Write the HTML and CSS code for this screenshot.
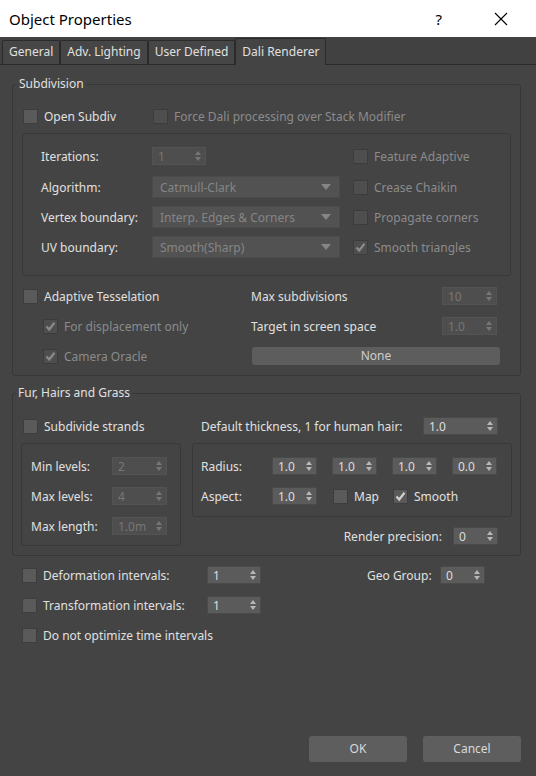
FILE: index.html
```html
<html>

<head>
  <link rel="stylesheet" href="styles.css">
</head>

<body>
  <div class="dialog">
    <div class="titlebar">
      <span class="title">Object Properties</span>
      <span class="help">?</span>
      <svg class="close" viewBox="0 0 14 14"><path d="M1 1L13 13M13 1L1 13" stroke="#000" stroke-width="1.1" fill="none" /></svg>
    </div>

    <div class="tabs">
      <div class="tab">General</div>
      <div class="tab">Adv. Lighting</div>
      <div class="tab">User Defined</div>
      <div class="tab active">Dali Renderer</div>
    </div>

    <div class="panel">
      <!-- Subdivision -->
      <fieldset class="group subdiv">
        <legend>Subdivision</legend>
        <div class="top-row">
          <label class="check open"><span class="cb"></span>Open Subdiv</label>
          <label class="check off"><span class="cb"></span>Force Dali processing over Stack Modifier</label>
        </div>

        <div class="box subdiv-box">
          <span>Iterations:</span>
          <span class="spin off w54"><span>1</span><i class="arr"></i></span>
          <label class="check off"><span class="cb"></span>Feature Adaptive</label>

          <span>Algorithm:</span>
          <span class="drop"><span>Catmull-Clark</span><i class="tri"></i></span>
          <label class="check off"><span class="cb"></span>Crease Chaikin</label>

          <span>Vertex boundary:</span>
          <span class="drop"><span>Interp. Edges &amp; Corners</span><i class="tri"></i></span>
          <label class="check off"><span class="cb"></span>Propagate corners</label>

          <span>UV boundary:</span>
          <span class="drop"><span>Smooth(Sharp)</span><i class="tri"></i></span>
          <label class="check off"><span class="cb on"><svg viewBox="0 0 13 13"><path d="M2.5 6.5L5.2 9.5L10.5 2.8" /></svg></span>Smooth triangles</label>
        </div>

        <div class="tess">
          <label class="check"><span class="cb"></span>Adaptive Tesselation</label>
          <div class="pair"><span>Max subdivisions</span><span class="spin off w55"><span>10</span><i class="arr"></i></span></div>

          <label class="check off indent"><span class="cb on"><svg viewBox="0 0 13 13"><path d="M2.5 6.5L5.2 9.5L10.5 2.8" /></svg></span>For displacement only</label>
          <div class="pair"><span>Target in screen space</span><span class="spin off w55"><span>1.0</span><i class="arr"></i></span></div>

          <label class="check off indent"><span class="cb on"><svg viewBox="0 0 13 13"><path d="M2.5 6.5L5.2 9.5L10.5 2.8" /></svg></span>Camera Oracle</label>
          <div class="btn-none">None</div>
        </div>
      </fieldset>

      <!-- Fur -->
      <fieldset class="group fur">
        <legend>Fur, Hairs and Grass</legend>
        <div class="fur-grid">
          <label class="check strands"><span class="cb"></span>Subdivide strands</label>
          <div class="thick"><span>Default thickness, 1 for human hair:</span><span class="spin w75"><span>1.0</span><i class="arr"></i></span></div>

          <div class="box levels">
            <span>Min levels:</span>
            <span class="spin off w55"><span>2</span><i class="arr"></i></span>
            <span>Max levels:</span>
            <span class="spin off w55"><span>4</span><i class="arr"></i></span>
            <span>Max length:</span>
            <span class="spin off w55"><span>1.0m</span><i class="arr"></i></span>
          </div>

          <div class="fur-right">
            <div class="box radius">
              <span>Radius:</span>
              <span class="spin w45"><span>1.0</span><i class="arr"></i></span>
              <span class="spin w45"><span>1.0</span><i class="arr"></i></span>
              <span class="spin w45"><span>1.0</span><i class="arr"></i></span>
              <span class="spin w45"><span>0.0</span><i class="arr"></i></span>
              <span>Aspect:</span>
              <span class="spin w45"><span>1.0</span><i class="arr"></i></span>
              <label class="check nudge"><span class="cb"></span>Map</label>
              <label class="check nudge"><span class="cb on"><svg viewBox="0 0 13 13"><path d="M2.5 6.5L5.2 9.5L10.5 2.8" /></svg></span>Smooth</label>
            </div>
            <div class="precision"><span>Render precision:</span><span class="spin w45"><span>0</span><i class="arr"></i></span></div>
          </div>
        </div>
      </fieldset>

      <!-- intervals -->
      <div class="intervals">
        <div class="irow">
          <label class="check iname"><span class="cb"></span>Deformation intervals:</label>
          <span class="spin w54"><span>1</span><i class="arr"></i></span>
          <span class="geo">Geo Group:</span>
          <span class="spin w45"><span>0</span><i class="arr"></i></span>
        </div>
        <div class="irow">
          <label class="check iname"><span class="cb"></span>Transformation intervals:</label>
          <span class="spin w54"><span>1</span><i class="arr"></i></span>
        </div>
        <div class="irow">
          <label class="check"><span class="cb"></span>Do not optimize time intervals</label>
        </div>
      </div>

      <div class="footer">
        <div class="btn">OK</div>
        <div class="btn">Cancel</div>
      </div>
    </div>
  </div>
</body>

</html>
```

FILE: styles.css
```css
/* dark 3ds max style dialog */
html,
body {
  margin: 0;
  background: #444;
}

body {
  font-family: "Noto Sans", "Segoe UI", sans-serif;
  font-size: 12px;
  color: #e0e0e0;
}

.dialog {
  width: 536px;
  height: 776px;
  display: flex;
  flex-direction: column;
}

/* title */
.titlebar {
  height: 37px;
  background: #fff;
  color: #000;
  display: flex;
  align-items: center;
  padding-left: 9px;
}

.title {
  flex: 1;
  font-size: 15px;
}

.help {
  font-size: 15px;
  margin-right: 52px;
}

.close {
  width: 14px;
  height: 14px;
  margin-right: 28px;
}

/* tabs */
.tabs {
  display: flex;
  align-items: flex-end;
  height: 24px;
  padding: 3px 0 0 2px;
  background: #414141;
  border-bottom: 1px solid #2a2a2a;
}

.tab {
  height: 23px;
  line-height: 22px;
  padding: 0 6px;
  background: #464646;
  border: 1px solid #2b2b2b;
  border-bottom: none;
  border-radius: 2px 2px 0 0;
}

.active {
  height: 26px;
  margin-bottom: -1px;
  line-height: 25px;
  background: #444;
}

/* panel */
.panel {
  flex: 1;
  display: flex;
  flex-direction: column;
  padding: 11px 15px 0 12px;
}

.group {
  margin: 0;
  min-width: 0;
  border: 1px solid #373737;
  border-radius: 3px;
}

.group legend {
  padding: 0 2px;
  margin-left: -5px;
  line-height: 16px;
}

.box {
  border: 1px solid #383838;
  border-radius: 3px;
}

/* controls */
.check {
  display: flex;
  align-items: center;
  gap: 6px;
  white-space: nowrap;
}

.off {
  color: #8b8b8b;
}

.cb {
  width: 15px;
  height: 15px;
  box-sizing: border-box;
  flex: none;
  background: #5a5a5a;
  border: 1px solid #3d3d3d;
}

.off .cb {
  background: #4e4e4e;
  border-color: #3c3c3c;
}

.cb svg {
  display: block;
  width: 13px;
  height: 13px;
  fill: none;
  stroke: #d0d0d0;
  stroke-width: 2.2;
}

.off .cb svg {
  stroke: #8a8a8a;
}

.spin {
  display: flex;
  align-items: center;
  justify-content: space-between;
  height: 18px;
  box-sizing: border-box;
  padding: 0 4px 0 5px;
  background: #5b5b5b;
  border: 1px solid #4a4a4a;
  color: #dedede;
}

.spin.off {
  background: #4e4e4e;
  border-color: #535353;
  color: #777;
}

.w45 { width: 45px; }
.w54 { width: 54px; }
.w55 { width: 55px; }
.w75 { width: 75px; }

.arr {
  display: flex;
  flex-direction: column;
  gap: 2px;
}

.arr::before,
.arr::after {
  content: "";
  border-left: 3px solid transparent;
  border-right: 3px solid transparent;
}

.arr::before {
  border-bottom: 4px solid #b8b8b8;
}

.arr::after {
  border-top: 4px solid #b8b8b8;
}

.off .arr::before {
  border-bottom-color: #777;
}

.off .arr::after {
  border-top-color: #777;
}

.drop {
  display: flex;
  align-items: center;
  justify-content: space-between;
  height: 22px;
  box-sizing: border-box;
  padding: 0 8px 0 7px;
  background: #525252;
  border: 1px solid #4b4b4b;
  color: #858585;
}

.tri {
  border-left: 5px solid transparent;
  border-right: 5px solid transparent;
  border-top: 6px solid #858585;
}

/* subdivision */
.subdiv {
  padding: 0 9px 4px;
}

.top-row {
  display: flex;
  height: 20px;
  margin-top: 14px;
  padding-left: 1px;
}

.open {
  width: 130px;
}

.subdiv-box {
  display: grid;
  grid-template-columns: 98px 188px 1fr;
  grid-template-rows: 32px 30px 30px 30px;
  column-gap: 13px;
  align-items: center;
  margin-top: 7px;
  padding: 6px 0 13px 18px;
}

.tess {
  display: grid;
  grid-template-columns: 228px 249px;
  grid-auto-rows: 30px;
  align-items: center;
  margin-top: 5px;
  padding-left: 1px;
}

.indent {
  padding-left: 20px;
}

.pair {
  display: flex;
  align-items: center;
  justify-content: space-between;
  padding-right: 3px;
}

.btn-none {
  height: 18px;
  width: 248px;
  margin-left: 1px;
  line-height: 18px;
  text-align: center;
  background: #5d5d5d;
  border-radius: 3px;
  color: #cdcdcd;
}

/* fur */
.fur {
  margin-top: 9px;
  padding: 0 8px 4px;
}

.fur-grid {
  display: grid;
  grid-template-columns: 160px 320px;
  grid-template-rows: 30px auto;
  column-gap: 11px;
  row-gap: 2px;
  margin-top: 10px;
}

.strands {
  padding-left: 2px;
}

.thick {
  display: flex;
  align-items: center;
  justify-content: space-between;
  padding: 0 14px 0 9px;
}

.levels {
  align-self: start;
  display: grid;
  grid-template-columns: 81px 55px;
  grid-auto-rows: 30px;
  align-items: center;
  padding: 7px 12px 4px 9px;
}

.radius {
  display: grid;
  grid-template-columns: 56px 45px 45px 45px 45px;
  grid-auto-rows: 30px;
  column-gap: 15px;
  align-items: center;
  padding: 7px 0 5px 8px;
}

.nudge {
  margin-left: 1px;
}

.precision {
  display: flex;
  align-items: center;
  justify-content: flex-end;
  gap: 11px;
  height: 30px;
  margin-top: 4px;
  padding-right: 14px;
}

/* bottom rows */
.intervals {
  margin-top: 4px;
  padding-left: 10px;
}

.irow {
  display: flex;
  align-items: center;
  height: 30px;
}

.iname {
  width: 185px;
}

.geo {
  width: 73px;
  margin-left: 106px;
}

.footer {
  margin-top: auto;
  display: flex;
  justify-content: flex-end;
  gap: 16px;
  padding-bottom: 14px;
}

.btn {
  width: 98px;
  height: 26px;
  line-height: 26px;
  text-align: center;
  background: #5e5e5e;
  border-radius: 3px;
  color: #dadada;
}
```
